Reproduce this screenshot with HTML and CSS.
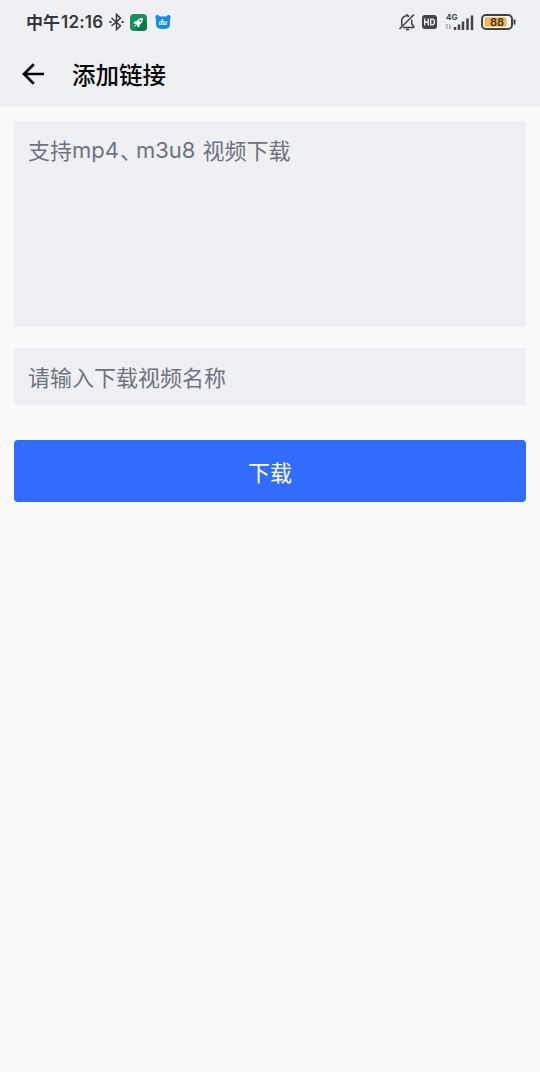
FILE: index.html
```html
<!DOCTYPE html>
<html lang="zh-CN">
<head>
<meta charset="utf-8">
<title>添加链接</title>
<link rel="stylesheet" href="styles.css">
</head>
<body>
<header class="header">
  <div class="status">
    <div class="status-group">
      <span class="time"><span class="period">中午</span><span class="clock">12:16</span></span>
      <svg class="bluetooth" width="16" height="18" viewBox="0 0 16 18" fill="none" stroke="#35363a" stroke-width="1.5"><path d="M2.500 5 11.500 12.700 7.500 16.500V1.500l4 3.800L2.500 13"/><path d="M.4 9h2M12.600 9h2" stroke-width="2"/></svg>
      <svg class="rocket" width="17" height="17" viewBox="0 0 17 17"><rect width="17" height="17" rx="4" fill="#15935a"/><path d="M4 13 13 4l4 4v5a4 4 0 0 1-4 4H8Z" fill="#087b49"/><path d="M13 4c-3 0-5 1-6.2 3L4.6 7.4 3.5 9.6l2 .1L7.300 11.500l.1 2 2.200-1.100.4-2.200C12 9 13 7 13 4Z" fill="#fff"/><circle cx="10.200" cy="6.800" r="1" fill="#15935a"/><path d="M5.400 10.500 4 13l2.500-1.400Z" fill="#fff"/></svg>
      <svg class="bear" width="16" height="16" viewBox="0 0 16 16"><path d="M1.200 1.200Q3-.1 4.700 2.500h6.600Q13-.1 14.800 1.200 16.500 3 15 5v5.500Q15 15 8 15t-7-4.500V5Q-.5 3 1.200 1.200Z" fill="#1689ec"/><text x="8" y="11" text-anchor="middle" class="bear-label">du</text></svg>
    </div>
    <div class="status-group">
      <svg class="bell" width="18" height="18" viewBox="0 0 18 18" fill="none" stroke="#3c3d41" stroke-width="1.500"><path d="M3.700 12.500V7.700a5 5 0 0 1 7.700-4.200M13.700 6.500v4.200l2 2.800v1H5M8 16.500h3M9 1v1.500M1.500 16 16 1.500"/></svg>
      <svg class="hd" width="15" height="14" viewBox="0 0 15 14"><rect width="15" height="14" rx="3" fill="#444548"/><path d="M2.700 3.500v7M6.300 3.500v7M2.700 7h3.600M8.700 4.100v5.800h1.500q2.200 0 2.200-2.900t-2.200-2.900Z" fill="none" stroke="#f5f5f6" stroke-width="1.300"/></svg>
      <svg class="signal" width="29" height="18" viewBox="0 0 29 18"><text x="1" y="7.300" class="network">4G</text><path d="M2 16v-5L.7 12.500M4.800 11v5l1.300-1.500" fill="none" stroke="#8f9094" stroke-width="1"/><path d="M10 17v-3M14 17v-5.500M18 17V8.500M22.500 17V5.500M27 17V2.500" stroke="#414247" stroke-width="2.500"/></svg>
      <svg class="battery" width="35" height="16" viewBox="0 0 35 16"><rect x="1" y="1" width="30" height="14" rx="4" fill="#fafafa" stroke="#414246" stroke-width="2"/><rect x="3.500" y="3.300" width="22" height="9.400" rx="1.500" fill="#f2b550"/><path d="M33.500 5.500v5" stroke="#414246" stroke-width="2"/><text x="16" y="12.200" text-anchor="middle" class="level">88</text></svg>
    </div>
  </div>
  <div class="titlebar">
    <svg class="back" width="22" height="22" viewBox="0 0 22 22" fill="none" stroke="#050506" stroke-width="2.700"><path d="M22 11H2M11.800 1.200 2 11l9.800 9.800"/></svg>
    <h1 class="title">添加链接</h1>
  </div>
</header>
<main class="form">
  <div class="field link"><span class="support">支持</span><span class="latin mp4">mp4</span><span class="comma">、</span><span class="latin m3u8">m3u8</span><span>视频下载</span></div>
  <div class="field name">请输入下载视频名称</div>
  <button class="submit" type="button">下载</button>
</main>
</body>
</html>
```
FILE: styles.css
```css
* { box-sizing: border-box; }
body {
  margin: 0;
  min-height: 1072px;
  background: #fafafa;
  font-family: "Noto Sans CJK SC", sans-serif;
}
svg { display: block; flex: none; }
.header { height: 107px; background: #eff0f4; }
.status {
  display: flex;
  justify-content: space-between;
  height: 44px;
  padding: 0 24px 0 26px;
}
.status-group { display: flex; align-items: center; }
.time { display: flex; width: 83px; color: #35363a; line-height: 24px; white-space: nowrap; }
.period { width: 35px; font-size: 17px; font-weight: 700; }
.clock { font: 600 17px/25px Inter, sans-serif; letter-spacing: .2px; }
.rocket { margin-left: 4.500px; }
.bear { margin-left: 8.500px; }
.bear-label { fill: #fff; font: italic 700 8px "Liberation Serif", serif; }
.hd { margin-left: 6px; }
.signal { margin-left: 8px; }
.network { fill: #414247; font: 700 8px Inter, sans-serif; }
.battery { margin-left: 7px; }
.level { fill: #3e3020; font: 600 11px Inter, sans-serif; }
.titlebar { display: flex; align-items: center; height: 60px; padding-left: 22px; }
.title { margin: 0 0 0 28px; color: #050506; font-size: 23.500px; line-height: 36px; font-weight: 500; }
.form { display: flex; flex-direction: column; padding: 14px; }
.field {
  display: flex;
  padding: 0 14px;
  background: #eff0f4;
  color: #6d737d;
  font-size: 22px;
  line-height: 57px;
  white-space: nowrap;
}
.link { height: 206px; }
.name { height: 57px; margin-top: 21px; }
.support { width: 44px; }
.latin { font-family: Inter, sans-serif; line-height: 59px; }
.mp4 { width: 48px; }
.comma { width: 16px; font-feature-settings: "halt"; }
.m3u8 { width: 66.500px; }
.submit {
  height: 62px;
  margin-top: 35px;
  padding: 0;
  border: 0;
  border-radius: 4px;
  background: #326cff;
  color: #fff;
  font: 400 22px/62px "Noto Sans CJK SC", sans-serif;
}
```
